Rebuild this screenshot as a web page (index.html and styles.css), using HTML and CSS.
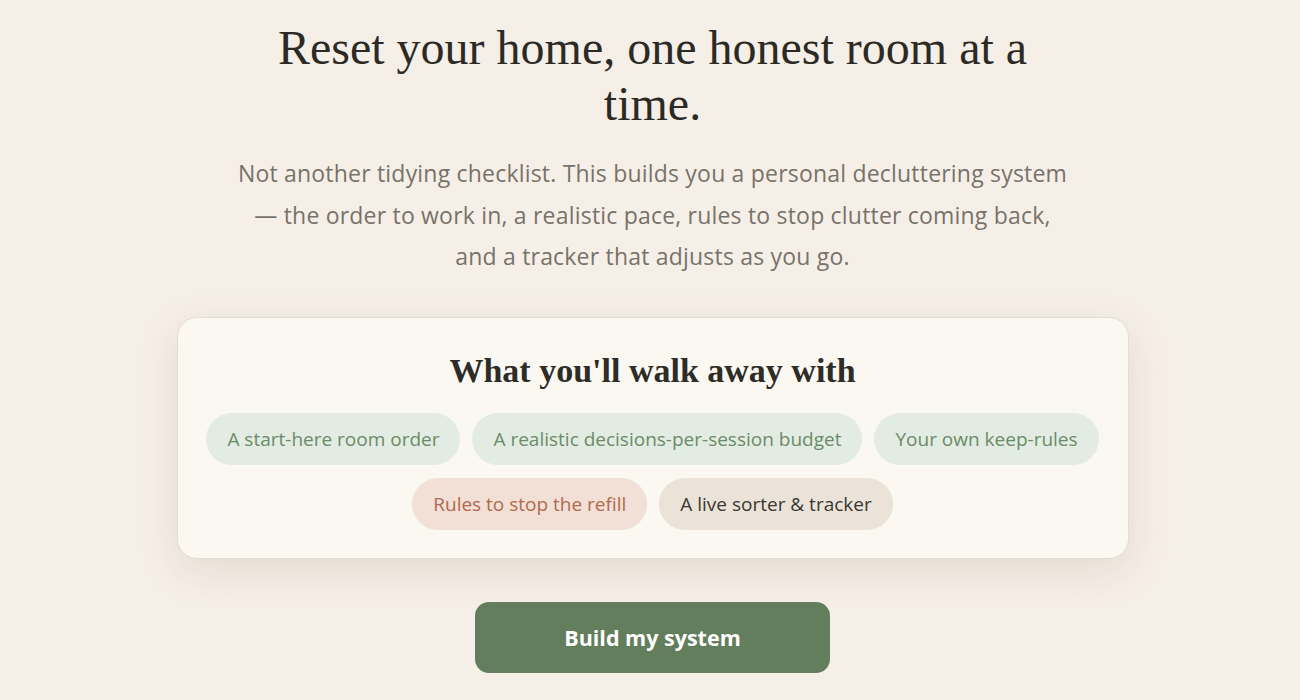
FILE: index.html
```html
<!DOCTYPE html>
<html lang="en">
<head>
<meta charset="utf-8">
<title>Reset your home</title>
<link rel="stylesheet" href="styles.css">
</head>
<body>
<main class="hero">
  <h1 class="title">Reset your home, one honest room at a time.</h1>
  <p class="lede">Not another tidying checklist. This builds you a personal decluttering system — the order to work in, a realistic pace, rules to stop clutter coming back, and a tracker that adjusts as you go.</p>
  <section class="card">
    <h2 class="card-title">What you'll walk away with</h2>
    <ul class="chips">
      <li class="chip chip-green">A start-here room order</li>
      <li class="chip chip-green">A realistic decisions-per-session budget</li>
      <li class="chip chip-green">Your own keep-rules</li>
      <li class="chip chip-rose">Rules to stop the refill</li>
      <li class="chip chip-sand">A live sorter &amp; tracker</li>
    </ul>
  </section>
  <button class="cta" type="button">Build my system</button>
</main>
</body>
</html>
```

FILE: styles.css
```css
html, body {
  margin: 0;
  padding: 0;
  background: #f6efe8;
}
body {
  font-family: "Open Sans", "Noto Sans", sans-serif;
  color: #2f2d29;
}
.hero {
  display: flex;
  flex-direction: column;
  align-items: center;
  padding-top: 20px;
  padding-left: 5px;
}
.title {
  margin: 0;
  max-width: 790px;
  text-align: center;
  font-family: "Liberation Serif", serif;
  font-weight: 400;
  font-size: 48px;
  line-height: 56px;
  color: #2c2a25;
}
.lede {
  margin: 21px 0 0;
  max-width: 834px;
  text-align: center;
  font-size: 23px;
  letter-spacing: 0.2px;
  line-height: 41.5px;
  color: #77736a;
}
.card {
  box-sizing: border-box;
  width: 952px;
  margin-top: 39px;
  padding: 31px 26px 28px;
  background: #fbf8f2;
  border: 1px solid #e4ddd1;
  border-radius: 20px;
  box-shadow: 0 12px 40px rgba(120, 105, 70, 0.14);
}
.card-title {
  margin: 0;
  text-align: center;
  font-family: "Liberation Serif", serif;
  font-weight: 700;
  font-size: 34px;
  line-height: 44px;
  color: #2e2c27;
}
.chips {
  list-style: none;
  margin: 20px 0 0;
  padding: 0;
  display: flex;
  flex-wrap: wrap;
  justify-content: center;
  gap: 13px 12px;
}
.chip {
  height: 52px;
  display: flex;
  align-items: center;
  padding: 0 21px;
  border-radius: 26px;
  font-size: 19px;
}
.chip-green {
  background: #e3ece3;
  color: #6b8b68;
}
.chip-rose {
  background: #f2e0d6;
  color: #b06a4f;
}
.chip-sand {
  background: #ebe3d8;
  color: #3a3833;
}
.cta {
  margin-top: 43px;
  width: 355px;
  height: 71px;
  border: 0;
  border-radius: 14px;
  background: #627e5d;
  color: #ffffff;
  font-family: "Open Sans", "Noto Sans", sans-serif;
  font-weight: 700;
  font-size: 21.5px;
  cursor: pointer;
}
```
